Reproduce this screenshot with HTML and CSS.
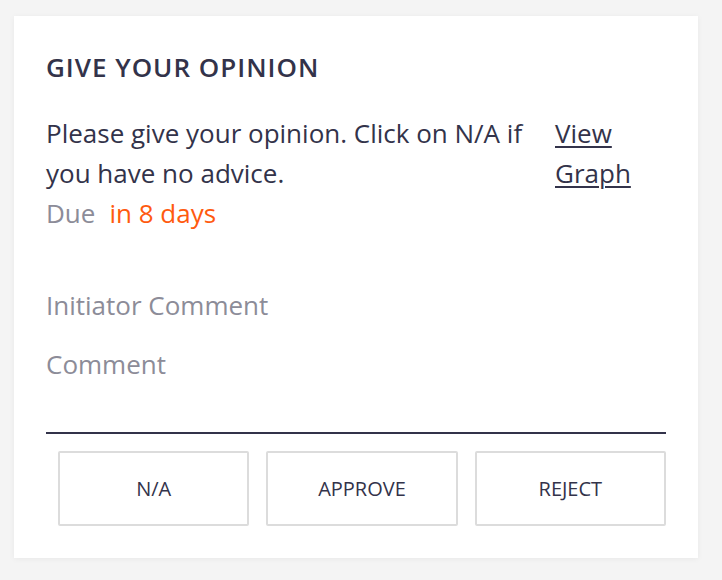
FILE: index.html
```html
<!DOCTYPE html>
<html lang="en">
<head>
<meta charset="utf-8">
<title>Give your opinion</title>
<link rel="stylesheet" href="styles.css">
</head>
<body>
<div class="card">
  <h2 class="card-title">GIVE YOUR OPINION</h2>
  <div class="intro">
    <div class="intro-text">
      <p class="message">Please give your opinion. Click on N/A if you have no advice.</p>
      <p class="due"><span class="due-label">Due</span><span class="due-value">in 8 days</span></p>
    </div>
    <a class="graph-link" href="#">View Graph</a>
  </div>
  <div class="field-label initiator">Initiator Comment</div>
  <div class="field-label comment">Comment</div>
  <div class="actions">
    <button class="btn">N/A</button>
    <button class="btn">APPROVE</button>
    <button class="btn">REJECT</button>
  </div>
</div>
</body>
</html>
```

FILE: styles.css
```css
html, body {
  margin: 0;
  padding: 0;
}
body {
  background: #f4f4f4;
  font-family: "Open Sans", "Liberation Sans", sans-serif;
  color: #33334a;
  padding: 16px 24px 22px 14px;
}
.card {
  width: 684px;
  box-sizing: border-box;
  background: #ffffff;
  padding: 35px 32px 32px 32px;
  box-shadow: 0 1px 6px rgba(0, 0, 0, 0.05);
}
.card-title {
  margin: 0;
  font-size: 26px;
  line-height: 32px;
  font-weight: 600;
  letter-spacing: 1px;
  color: #33334a;
}
.intro {
  margin-top: 30px;
  display: flex;
}
.intro-text {
  flex: 1;
  padding-right: 20px;
}
.message, .due {
  margin: 0;
  font-size: 26px;
  line-height: 40px;
}
.due-label {
  color: #8c8c98;
}
.due-value {
  color: #ff5a0f;
  margin-left: 14px;
}
.graph-link {
  width: 111px;
  font-size: 26px;
  line-height: 40px;
  color: #33334a;
  text-decoration: underline;
  text-decoration-thickness: 2px;
  text-underline-offset: 3px;
}
.field-label {
  font-size: 26px;
  line-height: 40px;
  color: #8c8c98;
}
.initiator {
  margin-top: 52px;
}
.comment {
  margin-top: 19px;
  padding-bottom: 48px;
  border-bottom: 2px solid #33334a;
}
.actions {
  display: flex;
  gap: 17px;
  margin-top: 17px;
  padding-left: 12px;
}
.btn {
  flex: 1;
  height: 75px;
  background: #ffffff;
  border: 2px solid #dcdcdc;
  border-radius: 2px;
  font-family: "Open Sans", "Liberation Sans", sans-serif;
  font-size: 20px;
  color: #33334a;
  padding: 0;
}
```
